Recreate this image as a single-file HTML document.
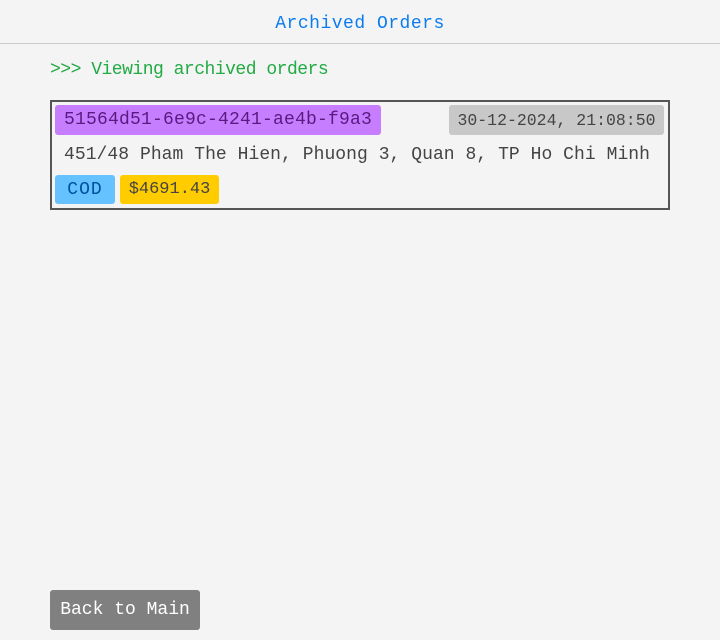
<!DOCTYPE html>
<html><head><meta charset="utf-8"><style>
*{margin:0;padding:0;box-sizing:border-box}
body{width:720px;height:640px;background:#f4f4f4;position:relative;overflow:hidden;font-family:"Liberation Mono","DejaVu Sans Mono",monospace}
.a{position:absolute;white-space:nowrap}
.t{display:flex;align-items:center;justify-content:center;border-radius:3px}
</style></head><body>
<div class="a" style="left:0;top:0;width:720px;height:44px;border-bottom:1px solid #ccc"></div>
<div class="a" style="left:0;width:720px;top:14px;text-align:center;color:#0a7cf0;font-size:18px;letter-spacing:0.5px">Archived Orders</div>
<div class="a" style="left:50px;top:60px;color:#22aa44;font-size:18px;letter-spacing:-0.5px">&gt;&gt;&gt; Viewing archived orders</div>
<div class="a" style="left:50px;top:100px;width:620px;height:110px;border:2px solid #555"></div>
<div class="a t" style="left:55px;top:105px;width:326px;height:30px;background:#c77dff;color:#5a1a80;font-size:18px;letter-spacing:0.2px">51564d51-6e9c-4241-ae4b-f9a3</div>
<div class="a t" style="left:449px;top:105px;width:215px;height:30px;background:#c8c8c8;color:#444;font-size:16.5px;letter-spacing:0px">30-12-2024, 21:08:50</div>
<div class="a" style="left:64px;top:145px;color:#444;font-size:18px;letter-spacing:0.05px">451/48 Pham The Hien, Phuong 3, Quan 8, TP Ho Chi Minh</div>
<div class="a t" style="left:55px;top:175px;width:60px;height:29px;background:#66c2ff;color:#0050a0;font-size:18px;letter-spacing:1px">COD</div>
<div class="a t" style="left:120px;top:175px;width:99px;height:29px;background:#ffcc00;color:#444;font-size:17px;letter-spacing:0px">$4691.43</div>
<div class="a t" style="left:50px;top:590px;width:150px;height:40px;background:#808080;color:#fff;font-size:18px;letter-spacing:0px">Back to Main</div>
</body></html>
